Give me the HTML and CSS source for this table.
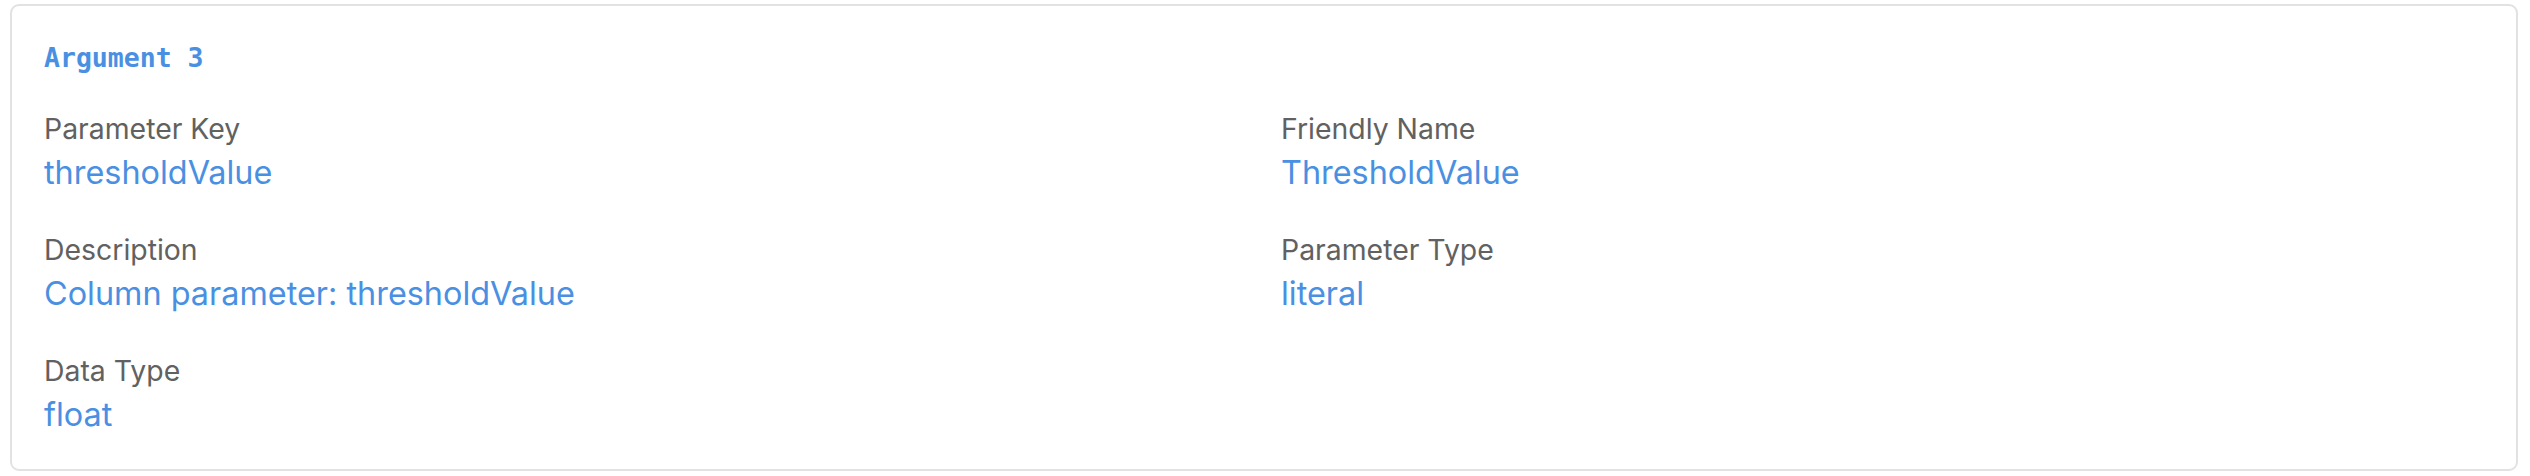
FILE: index.html
```html
<!DOCTYPE html>
<html>
<head>
<meta charset="utf-8">
<link rel="stylesheet" href="styles.css">
</head>
<body>
<section class="card">
  <h2 class="title">Argument 3</h2>
  <div class="grid">
    <div class="field">
      <div class="label">Parameter Key</div>
      <div class="value">thresholdValue</div>
    </div>
    <div class="field">
      <div class="label">Friendly Name</div>
      <div class="value">ThresholdValue</div>
    </div>
    <div class="field">
      <div class="label">Description</div>
      <div class="value">Column parameter: thresholdValue</div>
    </div>
    <div class="field">
      <div class="label">Parameter Type</div>
      <div class="value">literal</div>
    </div>
    <div class="field">
      <div class="label">Data Type</div>
      <div class="value">float</div>
    </div>
  </div>
</section>
</body>
</html>
```
FILE: styles.css
```css
html, body {
  margin: 0;
  padding: 0;
  background: #ffffff;
}
body {
  padding: 4px 12px 5px 10px;
  font-family: Inter, "Noto Sans", sans-serif;
}
.card {
  border: 2px solid #e2e2e2;
  border-radius: 9px;
  padding: 33px 32px 30px 32px;
  height: 467px;
  box-sizing: border-box;
}
.title {
  margin: 0 0 32px 0;
  font-family: "DejaVu Sans Mono", "Liberation Mono", monospace;
  font-weight: bold;
  font-size: 26.5px;
  line-height: 38px;
  color: #4a90e2;
}
.grid {
  display: grid;
  grid-template-columns: 1fr 1fr;
  column-gap: 34px;
  row-gap: 35px;
}
.label {
  font-size: 28.4px;
  line-height: 40px;
  color: #616161;
  margin-bottom: 2px;
}
.value {
  font-size: 32.4px;
  line-height: 44px;
  color: #4a90e2;
}
```
